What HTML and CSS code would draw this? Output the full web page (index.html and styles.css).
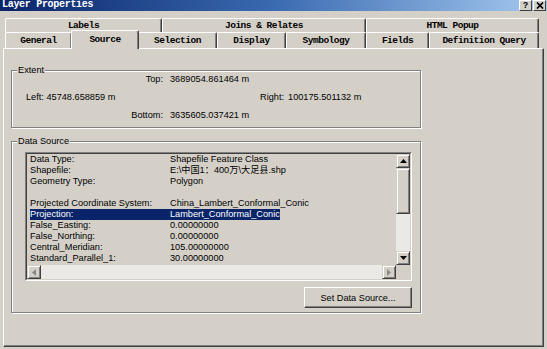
FILE: index.html
```html
<!DOCTYPE html>
<html lang="en">
<head>
    <meta charset="UTF-8">
    <meta name="viewport" content="width=device-width, initial-scale=1.0">
    <title>Layer Properties</title>
    <link rel="stylesheet" href="styles.css">
</head>
<body>
    <div class="titlebar">
        <span class="title">Layer Properties</span>
        <div class="title-buttons">
            <span class="tb-btn">?</span>
            <span class="tb-btn">
                <svg width="8" height="7" viewBox="0 0 8 7"><path d="M1 0.5 L7 6.5 M7 0.5 L1 6.5" stroke="#000" stroke-width="1.7"/></svg>
            </span>
        </div>
    </div>

    <div class="tabs">
        <div class="tab-row back">
            <div class="tab t-labels">Labels</div>
            <div class="tab t-joins">Joins &amp; Relates</div>
            <div class="tab t-html">HTML Popup</div>
        </div>
        <div class="tab-row front">
            <div class="tab t-general">General</div>
            <div class="tab t-source active">Source</div>
            <div class="tab t-selection">Selection</div>
            <div class="tab t-display">Display</div>
            <div class="tab t-symbology">Symbology</div>
            <div class="tab t-fields">Fields</div>
            <div class="tab t-defquery">Definition Query</div>
        </div>
    </div>

    <div class="panel">
        <div class="group extent">
            <div class="legend">Extent</div>
            <div class="ext-rows">
                <div class="ext-row">
                    <span class="ext-key">Top:</span>
                    <span class="ext-val">3689054.861464 m</span>
                </div>
                <div class="ext-row">
                    <span class="ext-left">Left: 45748.658859 m</span>
                    <span>Right:</span>
                    <span class="ext-rval">100175.501132 m</span>
                </div>
                <div class="ext-row">
                    <span class="ext-key">Bottom:</span>
                    <span class="ext-val">3635605.037421 m</span>
                </div>
            </div>
        </div>

        <div class="group datasource">
            <div class="legend">Data Source</div>
            <div class="ds-body">
                <div class="listbox">
                    <div class="list-inner">
                        <div class="list-text">
                            <div class="li"><span class="li-key">Data Type:</span><span>Shapefile Feature Class</span></div>
                            <div class="li"><span class="li-key">Shapefile:</span><span class="cjk">E:\中国1：400万\大足县.shp</span></div>
                            <div class="li"><span class="li-key">Geometry Type:</span><span>Polygon</span></div>
                            <div class="li"></div>
                            <div class="li"><span class="li-key">Projected Coordinate System:</span><span>China_Lambert_Conformal_Conic</span></div>
                            <div class="li"><span class="sel-band"><span class="li-key">Projection:</span><span>Lambert_Conformal_Conic</span></span></div>
                            <div class="li"><span class="li-key">False_Easting:</span><span>0.00000000</span></div>
                            <div class="li"><span class="li-key">False_Northing:</span><span>0.00000000</span></div>
                            <div class="li"><span class="li-key">Central_Meridian:</span><span>105.00000000</span></div>
                            <div class="li"><span class="li-key">Standard_Parallel_1:</span><span>30.00000000</span></div>
                        </div>
                        <div class="vscroll">
                            <div class="sb-btn"><svg width="7" height="4" viewBox="0 0 7 4"><polygon points="0,4 3.5,0 7,4" fill="#000"/></svg></div>
                            <div class="thumb"></div>
                            <div class="track"></div>
                            <div class="sb-btn"><svg width="7" height="4" viewBox="0 0 7 4"><polygon points="0,0 3.5,4 7,0" fill="#000"/></svg></div>
                        </div>
                        <div class="hscroll">
                            <div class="sb-btn"><svg width="4" height="7" viewBox="0 0 4 7"><polygon points="4,0 0,3.5 4,7" fill="#8a8a8a"/></svg></div>
                            <div class="track"></div>
                            <div class="sb-btn"><svg width="4" height="7" viewBox="0 0 4 7"><polygon points="0,0 4,3.5 0,7" fill="#8a8a8a"/></svg></div>
                        </div>
                        <div class="corner"></div>
                    </div>
                </div>
                <div class="ds-actions">
                    <button type="button" class="btn">Set Data Source...</button>
                </div>
            </div>
        </div>
    </div>
</body>
</html>
```

FILE: styles.css
```css
* {
    box-sizing: border-box;
}

body {
    margin: 0;
    width: 547px;
    height: 349px;
    overflow: hidden;
    background-color: #d4d0c8;
    font-family: "Liberation Sans", Arial, "Noto Sans CJK SC", sans-serif;
    font-size: 9.2px;
    color: #000;
}

/* title bar */
.titlebar {
    height: 11px;
    display: flex;
    justify-content: space-between;
    background: linear-gradient(to right, #0a246a, #3a6ab0 50%, #a6caf0);
}

.title {
    padding-left: 2px;
    font-family: "Liberation Mono", monospace;
    font-weight: bold;
    font-size: 10px;
    letter-spacing: -0.3px;
    line-height: 10px;
    color: #fff;
}

.title-buttons {
    display: flex;
    gap: 1px;
    padding-right: 1px;
}

.tb-btn {
    width: 13px;
    height: 11px;
    display: flex;
    align-items: center;
    justify-content: center;
    background-color: #d4d0c8;
    border: 1px solid;
    border-color: #fff #404040 #404040 #fff;
    font-family: "Liberation Sans", Arial, sans-serif;
    font-weight: bold;
    font-size: 9px;
    line-height: 9px;
}

/* tabs */
.tabs {
    margin-top: 7px;
    padding-left: 5px;
    font-family: "Liberation Mono", monospace;
    font-weight: bold;
    font-size: 9.5px;
    letter-spacing: -0.5px;
}

.tab-row {
    display: flex;
}

.tab-row.back {
    height: 14px;
}

.tab-row.front {
    height: 16px;
}

.tab {
    display: flex;
    align-items: center;
    justify-content: center;
    background-color: #d4d0c8;
    border-top: 1px solid #fff;
    border-left: 1px solid #fff;
    border-right: 1px solid #404040;
    border-radius: 2px 2px 0 0;
    box-shadow: inset -1px 0 #808080;
}

.tab.active {
    position: relative;
    z-index: 1;
    margin: -2px -1px -1px;
    padding-bottom: 2px;
}

.t-labels { width: 157px; }
.t-joins { width: 204px; }
.t-html { width: 173px; }
.t-general { width: 67px; }
.t-source { width: 68px; }
.t-selection { width: 79px; }
.t-display { width: 69px; }
.t-symbology { width: 80px; }
.t-fields { width: 63px; }
.t-defquery { width: 110px; }

/* panel */
.panel {
    margin-left: 3px;
    width: 541px;
    height: 299px;
    padding: 21px 0 0 7px;
    border: 1px solid;
    border-color: #fff #404040 #404040 #fff;
    box-shadow: inset -1px -1px #808080;
}

.group {
    width: 410px;
    border: 1px solid #808080;
    box-shadow: inset 1px 1px #fff, 1px 1px #fff;
}

.legend {
    width: fit-content;
    margin: -6px 0 0 5px;
    padding: 0 1px;
    line-height: 11px;
    background-color: #d4d0c8;
}

/* extent */
.ext-rows {
    margin-top: -6px;
    padding-bottom: 3px;
}

.ext-row {
    display: flex;
    align-items: center;
    height: 18px;
}

.ext-key {
    width: 151px;
    text-align: right;
}

.ext-val {
    margin-left: 7px;
}

.ext-left {
    width: 248px;
    padding-left: 14px;
}

.ext-rval {
    margin-left: 4px;
}

/* data source */
.datasource {
    margin-top: 13px;
}

.ds-body {
    width: 387px;
    margin: 5px 0 0 13px;
    padding-bottom: 4px;
}

.listbox {
    height: 129px;
    border: 1px solid;
    border-color: #808080 #fff #fff #808080;
}

.list-inner {
    height: 100%;
    display: grid;
    grid-template-columns: 1fr 14px;
    grid-template-rows: 1fr 14px;
    border: 1px solid;
    border-color: #404040 #d4d0c8 #d4d0c8 #404040;
}

.list-text {
    padding-left: 3px;
    overflow: hidden;
    line-height: 11px;
}

.li {
    display: flex;
    height: 11px;
    white-space: nowrap;
}

.li-key {
    width: 140px;
}

.cjk {
    font-family: "Liberation Sans", "Noto Sans CJK SC", sans-serif;
}

.sel-band {
    display: flex;
    background-color: #0a246a;
    color: #fff;
}

.vscroll {
    display: flex;
    flex-direction: column;
}

.hscroll {
    display: flex;
}

.track {
    flex: 1;
    background-color: #ebe9e5;
}

.sb-btn {
    width: 14px;
    height: 14px;
    flex: none;
    display: flex;
    align-items: center;
    justify-content: center;
    background-color: #d4d0c8;
    border: 1px solid;
    border-color: #d4d0c8 #404040 #404040 #d4d0c8;
    box-shadow: inset 1px 1px #fff, inset -1px -1px #808080;
}

.thumb {
    height: 46px;
    flex: none;
    background-color: #d4d0c8;
    border: 1px solid;
    border-color: #d4d0c8 #404040 #404040 #d4d0c8;
    box-shadow: inset 1px 1px #fff, inset -1px -1px #808080;
}

.corner {
    background-color: #d4d0c8;
}

.ds-actions {
    display: flex;
    justify-content: flex-end;
    margin-top: 6px;
}

.btn {
    width: 108px;
    height: 21px;
    padding: 0;
    background-color: #d4d0c8;
    border: 1px solid;
    border-color: #fff #404040 #404040 #fff;
    box-shadow: inset -1px -1px #808080;
    font-family: inherit;
    font-size: 9.2px;
    color: #000;
}
```
